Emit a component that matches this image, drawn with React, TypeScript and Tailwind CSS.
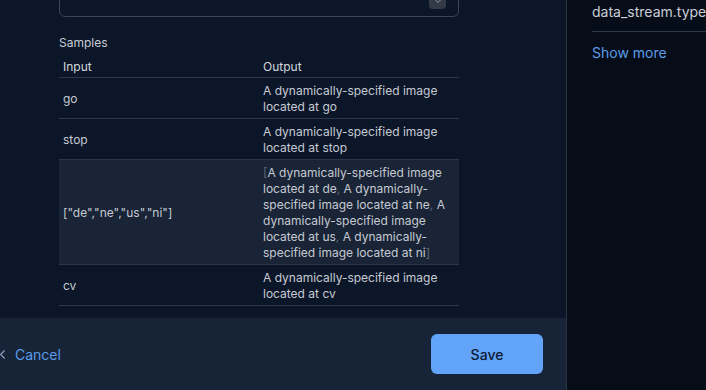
import { ChevronDown, ChevronLeft } from "lucide-react";

type Sample = { input: string; output: React.ReactNode };

const dim = "text-[#5b6577]";

const samples: Sample[] = [
  { input: "go", output: "A dynamically-specified image located at go" },
  { input: "stop", output: "A dynamically-specified image located at stop" },
  {
    input: '["de","ne","us","ni"]',
    output: (
      <>
        <span className={dim}>[</span>A dynamically-specified image located at de
        <span className={dim}>,</span> A dynamically-specified image located at ne
        <span className={dim}>,</span> A dynamically-specified image located at us
        <span className={dim}>,</span> A dynamically-specified image located at ni
        <span className={dim}>]</span>
      </>
    ),
  },
  { input: "cv", output: "A dynamically-specified image located at cv" },
];

export default function App() {
  return (
    <div
      className="flex h-[390px] w-[706px] overflow-hidden bg-[#060d19] text-[#c9ced6]"
      style={{ fontFamily: "Inter, 'Noto Sans', sans-serif" }}
    >
      <div className="flex w-[566px] shrink-0 flex-col bg-[#0c1629]">
        <div className="flex-1 overflow-hidden pl-[59px]">
          <div className="mt-[-23px] flex h-10 w-[400px] items-start justify-end rounded-md border border-[#3b4556] pr-3 pt-[15px]">
            <div className="flex h-[16px] w-[17px] items-center justify-center rounded-sm bg-[#343a48]">
              <ChevronDown className="h-3 w-3 text-[#8a93a3]" strokeWidth={2} />
            </div>
          </div>

          <div className="mt-[18px] text-[12px] leading-4 text-[#c9ced6]">Samples</div>

          <table className="mt-[5px] w-[400px] table-fixed border-collapse text-[12px] leading-4">
            <thead>
              <tr className="border-b border-[#2d3747]">
                <th className="w-[200px] px-1 pb-[2px] pt-[3px] text-left font-normal text-[#d4d8de]">Input</th>
                <th className="w-[200px] px-1 pb-[2px] pt-[3px] text-left font-normal text-[#d4d8de]">Output</th>
              </tr>
            </thead>
            <tbody>
              {samples.map((s, i) => (
                <tr
                  key={s.input}
                  className={`border-b border-[#2d3747] ${i === 2 ? "bg-[#192436]" : ""}`}
                >
                  <td className="px-1 pb-[3px] pt-[5px] align-middle text-[#c5cad2]">{s.input}</td>
                  <td className="pb-[3px] pl-1 pr-3 pt-[5px] align-middle text-[#c5cad2]">{s.output}</td>
                </tr>
              ))}
            </tbody>
          </table>
        </div>

        <div className="flex h-[72px] shrink-0 items-center justify-between bg-[#172337] pr-[23px]">
          <button className="flex items-center gap-[5px] text-[14px] text-[#5c9ce8]">
            <ChevronLeft className="ml-[-5px] h-[15px] w-[15px] text-[#8fa3bf]" strokeWidth={1.75} />
            Cancel
          </button>
          <button className="h-10 w-[112px] rounded-md bg-[#62a4fa] text-[14px] font-medium text-[#0d1a33]">
            Save
          </button>
        </div>
      </div>

      <div className="flex-1 border-l border-[#283242] pl-[25px]">
        <div className="whitespace-nowrap border-b border-[#2e3848] pb-[9px] pt-[2px] text-[14px] leading-5 text-[#c9ced6]">
          data_stream.type
        </div>
        <div className="mt-[11px] text-[14px] leading-5 text-[#5c9ce8]">Show more</div>
      </div>
    </div>
  );
}
